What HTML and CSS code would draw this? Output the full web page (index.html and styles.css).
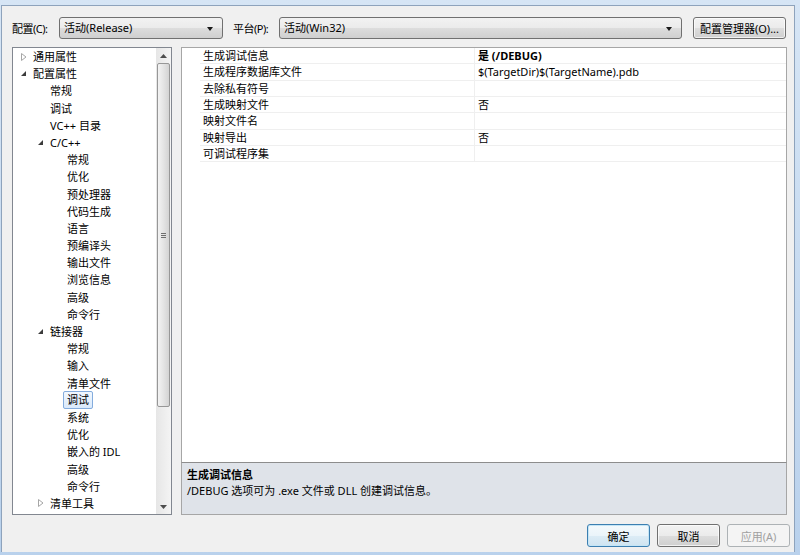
FILE: index.html
```html
<!DOCTYPE html>
<html lang="zh-CN">
<head>
<meta charset="UTF-8">
<title>属性页</title>
<link rel="stylesheet" href="styles.css">
</head>
<body>
<div class="window">

  <div class="toolbar">
    <span class="label">配置(C):</span>
    <div class="combo combo-config">活动(Release)<span class="drop"></span></div>
    <span class="label label-platform">平台(P):</span>
    <div class="combo combo-platform">活动(Win32)<span class="drop"></span></div>
    <button class="btn btn-manager">配置管理器(O)...</button>
  </div>

  <div class="main">
    <div class="tree">
      <ul class="tree-list">
        <li class="l0"><span class="tw"><svg width="6" height="8" viewBox="0 0 6 8"><path d="M0.5 0.5 L5 4 L0.5 7.5 Z" fill="none" stroke="#a6a6a6"/></svg></span>通用属性</li>
        <li class="l0"><span class="tw"><svg width="6" height="6" viewBox="0 0 6 6"><path d="M5 0 L5 5 L0 5 Z" fill="#3c3c3c"/></svg></span>配置属性</li>
        <li class="l1"><span class="tw"></span>常规</li>
        <li class="l1"><span class="tw"></span>调试</li>
        <li class="l1"><span class="tw"></span>VC++ 目录</li>
        <li class="l1"><span class="tw"><svg width="6" height="6" viewBox="0 0 6 6"><path d="M5 0 L5 5 L0 5 Z" fill="#3c3c3c"/></svg></span>C/C++</li>
        <li class="l2"><span class="tw"></span>常规</li>
        <li class="l2"><span class="tw"></span>优化</li>
        <li class="l2"><span class="tw"></span>预处理器</li>
        <li class="l2"><span class="tw"></span>代码生成</li>
        <li class="l2"><span class="tw"></span>语言</li>
        <li class="l2"><span class="tw"></span>预编译头</li>
        <li class="l2"><span class="tw"></span>输出文件</li>
        <li class="l2"><span class="tw"></span>浏览信息</li>
        <li class="l2"><span class="tw"></span>高级</li>
        <li class="l2"><span class="tw"></span>命令行</li>
        <li class="l1"><span class="tw"><svg width="6" height="6" viewBox="0 0 6 6"><path d="M5 0 L5 5 L0 5 Z" fill="#3c3c3c"/></svg></span>链接器</li>
        <li class="l2"><span class="tw"></span>常规</li>
        <li class="l2"><span class="tw"></span>输入</li>
        <li class="l2"><span class="tw"></span>清单文件</li>
        <li class="l2 selected"><span class="tw"></span><span class="sel">调试</span></li>
        <li class="l2"><span class="tw"></span>系统</li>
        <li class="l2"><span class="tw"></span>优化</li>
        <li class="l2"><span class="tw"></span>嵌入的 IDL</li>
        <li class="l2"><span class="tw"></span>高级</li>
        <li class="l2"><span class="tw"></span>命令行</li>
        <li class="l1"><span class="tw"><svg width="6" height="8" viewBox="0 0 6 8"><path d="M0.5 0.5 L5 4 L0.5 7.5 Z" fill="none" stroke="#a6a6a6"/></svg></span>清单工具</li>
      </ul>
      <div class="scrollbar">
        <div class="sb-arrow"><svg width="7" height="4" viewBox="0 0 7 4"><path d="M0 4 L3.5 0 L7 4 Z" fill="#4d4d4d"/></svg></div>
        <div class="sb-thumb"><span class="grip"></span></div>
        <div class="sb-track"></div>
        <div class="sb-arrow"><svg width="7" height="4" viewBox="0 0 7 4"><path d="M0 0 L3.5 4 L7 0 Z" fill="#4d4d4d"/></svg></div>
      </div>
    </div>

    <div class="right">
      <div class="grid">
        <div class="rows">
          <div class="row"><div class="name">生成调试信息</div><div class="value bold">是 (/DEBUG)</div></div>
          <div class="row"><div class="name">生成程序数据库文件</div><div class="value">$(TargetDir)$(TargetName).pdb</div></div>
          <div class="row"><div class="name">去除私有符号</div><div class="value"></div></div>
          <div class="row"><div class="name">生成映射文件</div><div class="value">否</div></div>
          <div class="row"><div class="name">映射文件名</div><div class="value"></div></div>
          <div class="row"><div class="name">映射导出</div><div class="value">否</div></div>
          <div class="row"><div class="name">可调试程序集</div><div class="value"></div></div>
        </div>
      </div>
      <div class="desc">
        <div class="desc-title">生成调试信息</div>
        <div class="desc-text">/DEBUG 选项可为 .exe 文件或 DLL 创建调试信息。</div>
      </div>
    </div>
  </div>

  <div class="footer">
    <button class="btn btn-ok">确定</button>
    <button class="btn">取消</button>
    <button class="btn" disabled>应用(A)</button>
  </div>

</div>
</body>
</html>
```

FILE: styles.css
```css
:root {
  --face: #f0f0f0;
  --border: #a0a0a0;
  --text: #000;
}

html, body {
  margin: 0;
  height: 555px;
  overflow: hidden;
}

body {
  background: linear-gradient(to bottom, #d6e5f5, #b9d1ec);
  font-family: "Noto Sans", "Noto Sans CJK SC", sans-serif;
  font-size: 11px;
  color: var(--text);
  padding: 5px 5px 0 1px;
  box-sizing: border-box;
}

.window {
  height: 547px;
  background: var(--face);
  border: 1px solid #8ea3bc;
  border-bottom: none;
  box-sizing: border-box;
  display: flex;
  flex-direction: column;
}

/* top bar */
.toolbar {
  display: flex;
  align-items: center;
  padding: 11px 0 0 10px;
  height: 22px;
  box-sizing: content-box;
}

.label {
  width: 37px;
  margin-right: 10px;
  white-space: nowrap;
  letter-spacing: -0.5px;
}

.label-platform {
  width: 36px;
}

.combo {
  position: relative;
  height: 22px;
  line-height: 20px;
  box-sizing: border-box;
  padding-left: 4px;
  border: 1px solid #707070;
  border-radius: 3px;
  background: linear-gradient(to bottom, #f2f2f2 0%, #ebebeb 50%, #dddddd 51%, #cfcfcf 100%);
  margin-right: 10px;
}

.combo-config { width: 164px; }
.combo-platform { width: 403px; margin-right: 11px; }

.drop {
  position: absolute;
  right: 9px;
  top: 9px;
  border-left: 3.5px solid transparent;
  border-right: 3.5px solid transparent;
  border-top: 4px solid #1a1a1a;
}

.btn {
  font: inherit;
  color: var(--text);
  height: 22px;
  padding: 0;
  border: 1px solid #707070;
  border-radius: 3px;
  background: linear-gradient(to bottom, #f2f2f2 0%, #ebebeb 50%, #dddddd 51%, #cfcfcf 100%);
  box-shadow: inset 0 0 0 1px rgba(255,255,255,0.7);
}

.btn-manager { width: 93px; }

.btn:disabled {
  color: #a0a0a0;
  border-color: #adb2b5;
  background: #f4f4f4;
  box-shadow: none;
}

.btn-ok {
  border-color: #3c7fb1;
  box-shadow: inset 0 0 0 1px #c4e5f6;
  background: linear-gradient(to bottom, #f4f9fc 0%, #eaf4fa 50%, #dcecf6 51%, #cfe4f1 100%);
}

/* main area */
.main {
  display: flex;
  gap: 9px;
  margin: 8px 0 0 10px;
  height: 468px;
}

.tree {
  width: 160px;
  border: 1px solid #828790;
  background: #fff;
  box-sizing: border-box;
  display: flex;
}

.tree-list {
  flex: 1;
  list-style: none;
  margin: 0;
  padding: 0;
}

.tree-list li {
  height: 17.2px;
  line-height: 17.2px;
  white-space: nowrap;
  display: flex;
  align-items: center;
}

.tw {
  width: 12px;
  flex: none;
  display: flex;
  align-items: center;
}

.l0 { padding-left: 8px; }
.l1 { padding-left: 25px; }
.l2 { padding-left: 42px; }

.sel {
  margin-left: -4px;
  padding: 0 3px;
  height: 16px;
  line-height: 15px;
  border: 1px solid #84acdd;
  border-radius: 2px;
  background: linear-gradient(to bottom, #f2f8fe, #d9e9fb);
}

.scrollbar {
  width: 15px;
  background: linear-gradient(to right, #e6e6e6, #f4f4f4);
  display: flex;
  flex-direction: column;
}

.sb-arrow {
  height: 15px;
  display: flex;
  align-items: center;
  justify-content: center;
}

.sb-thumb {
  height: 344px;
  margin: 0 1px;
  border: 1px solid #979797;
  border-radius: 2px;
  box-sizing: border-box;
  background: linear-gradient(to right, #f3f3f3, #e4e4e4 50%, #d3d3d3);
  display: flex;
  align-items: center;
  justify-content: center;
}

.grip {
  width: 5px;
  height: 5px;
  background: repeating-linear-gradient(to bottom, #6f6f6f 0 1px, transparent 1px 2px);
}

.sb-track {
  flex: 1;
}

.right {
  width: 606px;
  display: flex;
  flex-direction: column;
}

.grid {
  flex: 1;
  background: #fff;
  border: 1px solid #a6a6a6;
  border-bottom: none;
  padding-left: 18px;
}

.row {
  display: flex;
  height: 16.33px;
  line-height: 16px;
  border-bottom: 1px solid #efefef;
  box-sizing: border-box;
}

.name {
  width: 275px;
  padding-left: 3px;
  border-right: 1px solid #efefef;
  box-sizing: border-box;
}

.value {
  padding-left: 3px;
}

.bold {
  font-weight: bold;
}

.desc {
  height: 53px;
  border: 1px solid #a6a6a6;
  border-top: 1px solid #8d8d8d;
  background: #dfe3e9;
  box-sizing: border-box;
  padding: 4px 0 0 5px;
  line-height: 16px;
}

.desc-title {
  font-weight: bold;
}

/* bottom buttons */
.footer {
  display: flex;
  justify-content: flex-end;
  gap: 7px;
  padding: 9px 4px 0 0;
}

.footer .btn {
  width: 63px;
  height: 23px;
}
```
